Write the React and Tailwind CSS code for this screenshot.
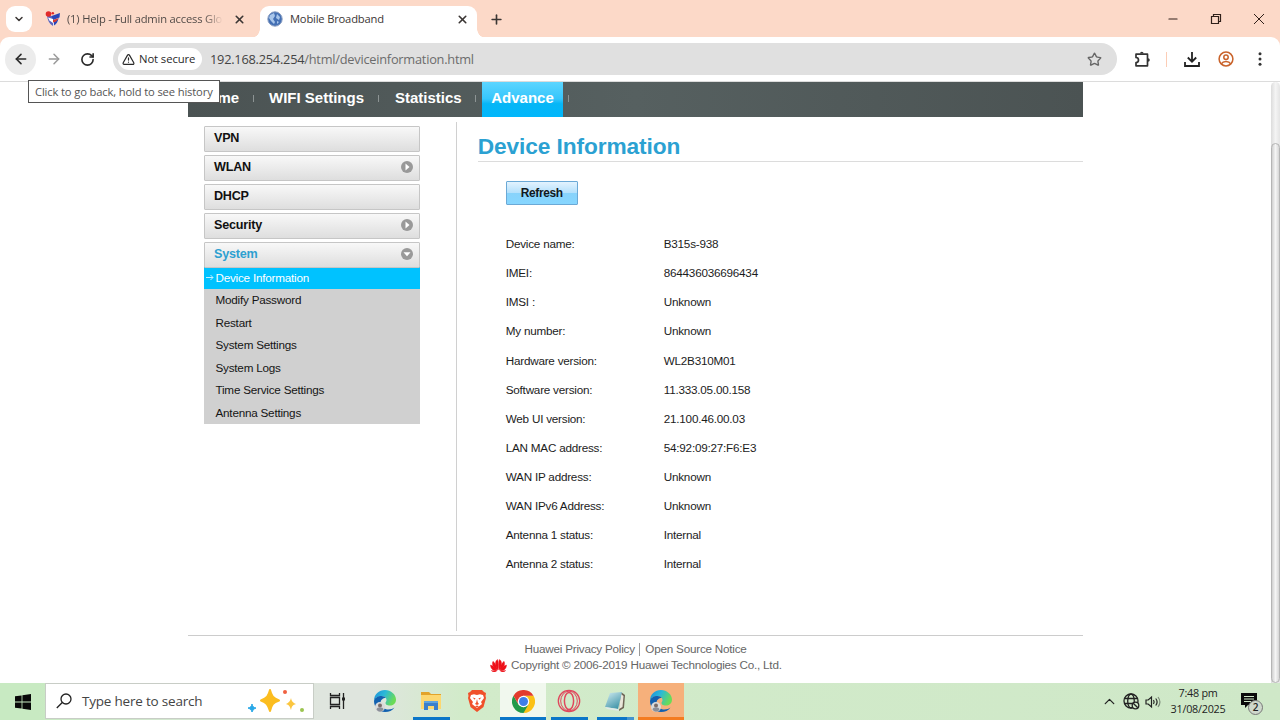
import { ArrowLeft, ArrowRight, ChevronDown, ChevronUp, Minus, Plus, RotateCw, Star, TriangleAlert, X } from 'lucide-react';

const menu = [
    { label: 'VPN' },
    { label: 'WLAN', icon: 'right' },
    { label: 'DHCP' },
    { label: 'Security', icon: 'right' },
    { label: 'System', icon: 'down' },
];

const subMenu = [
    'Modify Password',
    'Restart',
    'System Settings',
    'System Logs',
    'Time Service Settings',
    'Antenna Settings',
];

const info = [
    ['Device name:', 'B315s-938'],
    ['IMEI:', '864436036696434'],
    ['IMSI :', 'Unknown'],
    ['My number:', 'Unknown'],
    ['Hardware version:', 'WL2B310M01'],
    ['Software version:', '11.333.05.00.158'],
    ['Web UI version:', '21.100.46.00.03'],
    ['LAN MAC address:', '54:92:09:27:F6:E3'],
    ['WAN IP address:', 'Unknown'],
    ['WAN IPv6 Address:', 'Unknown'],
    ['Antenna 1 status:', 'Internal'],
    ['Antenna 2 status:', 'Internal'],
];

function ForumIcon() {
    return (
        <svg width="16" height="16" viewBox="0 0 16 16">
            <path d="M2 4l6 1.500V15C4 12.500 2.500 9 2 4z" fill="#5a66c0" />
            <path d="M8 5.500l7-3c0 6-2 10-7 12.500z" fill="#dfe2f2" />
            <path d="M6.500 5l8.500-3-.5 4.500L8 9z" fill="#2a46b8" />
            <path d="M9 11l4.500-3.500c-.7 3.500-2 5.500-4.500 7z" fill="#2a46b8" />
            <path d="M8 9l6-2-3 3.500-3 1z" fill="#d83a30" />
            <path d="M3 6.500l5 1.500v4L4.500 9.500z" fill="#fff" />
            <circle cx="3.500" cy="3" r="2.800" fill="#e22a2a" />
            <circle cx="7.800" cy="2.200" r="1.300" fill="#e22a2a" />
        </svg>
    );
}

function GlobeFavicon() {
    return (
        <svg width="16" height="16" viewBox="0 0 16 16">
            <circle cx="8" cy="8" r="7.200" fill="#4470b4" stroke="#8b9fc2" />
            <path d="M3 4l4-2 1 3-2 3 2 3-1 2-3-3-2-3zM10 3l3 3-1 3-3-2zM10 10l2 1-2 2z" fill="#a9c6ea" />
        </svg>
    );
}

function EdgeIcon() {
    return (
        <svg width="24" height="24" viewBox="0 0 24 24">
            <defs>
                <linearGradient id="edgeTop" x1="0" y1="0" x2="1" y2="0.400">
                    <stop offset="0" stopColor="#1c8edb" />
                    <stop offset="0.500" stopColor="#2bb9d8" />
                    <stop offset="1" stopColor="#6bdb57" />
                </linearGradient>
            </defs>
            <path d="M1 12C1 5 6 1 12 1s11 4.500 11 9.500c0 4-3 6-6 6-3.500 0-4.500-1.500-4.500-2.500s1-1.500 1-3c0-2-2-4-5-4-4 0-7 2.500-7.500 5z" fill="url(#edgeTop)" />
            <path d="M1 12c.5-3 3.500-5 7.500-5 2 0 3.500.8 4.300 2-3 0-5.300 2-5.300 5 0 4 4 6.500 8 6.500 2.500 0 4.500-.8 6-2C19.500 21.500 16 23 12 23 6 23 1 18.500 1 12z" fill="#1261b0" />
            <circle cx="7" cy="18" r="5" fill="#dadada" />
            <circle cx="7" cy="16.500" r="2" fill="#7b6c68" />
            <path d="M3.500 20.500c.5-3 6.500-3 7 0-2 3-5 3-7 0z" fill="#8b8f99" />
        </svg>
    );
}

function ExplorerIcon() {
    return (
        <svg width="22" height="20" viewBox="0 0 22 20">
            <path d="M1 1h8l2 2h10v15H1z" fill="#e2a32a" />
            <path d="M1 4h20v14H1z" fill="#fcd770" />
            <path d="M4 11h14v8h-4v-4H8v4H4z" fill="#3a7fcb" />
            <path d="M4 10h14v2H4z" fill="#5fa4df" />
        </svg>
    );
}

function BraveIcon() {
    return (
        <svg width="20" height="24" viewBox="0 0 20 24">
            <path d="M5 1h10l2 2 2 1-.5 3 .5 2-2.500 9-6.500 5-6.500-5L1 9l.5-2L1 4l2-1z" fill="#f0502a" />
            <path d="M4 6l3-.8 3 .8 3-.8 3 .8 1 3-3 4 1 2-5 4-5-4 1-2-3-4z" fill="#fff" />
            <path d="M5.500 8.500l3 .7-.7 1.500zM14.500 8.500l-3 .7.700 1.500zM10 10l.8 3.500L12 15l-2 1-2-1 1.200-1.500zM8 17.200l2-.8 2 .8-2 1.200z" fill="#f0502a" />
        </svg>
    );
}

function ChromeIcon() {
    return (
        <svg width="23" height="23" viewBox="0 0 24 24">
            <path d="M12 12L22.400 6A12 12 0 0 1 12 24z" fill="#fbc116" />
            <path d="M12 6h10.400L17.200 15z" fill="#fbc116" />
            <path d="M12 24A12 12 0 0 1 1.600 6l5.200 9 5.200 3 5.200-3z" fill="#229a49" />
            <path d="M1.600 6A12 12 0 0 1 22.400 6H12l-5.200 9z" fill="#e33b2e" />
            <circle cx="12" cy="12" r="6" fill="#fff" />
            <circle cx="12" cy="12" r="4.700" fill="#3f7ee8" />
        </svg>
    );
}

function OperaIcon() {
    return (
        <svg width="24" height="24" viewBox="0 0 24 24" fill="none" stroke="#e0475c">
            <circle cx="12" cy="12" r="10.700" strokeWidth="1.300" />
            <ellipse cx="12" cy="12" rx="8.300" ry="9.800" strokeWidth="1" />
            <ellipse cx="12" cy="12" rx="4.600" ry="8.600" strokeWidth="1.500" />
        </svg>
    );
}

function NotepadIcon() {
    return (
        <svg width="22" height="21" viewBox="0 0 22 21">
            <defs>
                <linearGradient id="note" x1="0" y1="0" x2="0.600" y2="1">
                    <stop offset="0" stopColor="#d4eef2" />
                    <stop offset="1" stopColor="#4597ab" />
                </linearGradient>
            </defs>
            <path d="M17 1l4 3-1 13-5 3z" fill="#6e6455" />
            <path d="M17 3l2.500 2-1 11-3.500 2z" fill="#e9e6da" />
            <path d="M6 2l12-1-4 17-13-2z" fill="url(#note)" />
            <path d="M1 16l13 2 1 2-12-2z" fill="#dfeaea" />
        </svg>
    );
}

function HuaweiLogo() {
    return (
        <svg width="17" height="13" viewBox="0 0 17 13" fill="#ee1018" stroke="#ee1018" strokeWidth="0.400">
            <path d="M8 11C5 7 4.500 2 7.600.5 8.600 3 8.500 8 8 11z" />
            <path d="M9 11c3-4 3.500-9 .4-10.500C8.400 3 8.500 8 9 11z" />
            <path d="M7.300 11.300C3 9 1.500 5 3 2.300 5.500 4 7 8 7.300 11.300z" />
            <path d="M9.700 11.300c4.300-2.300 5.800-6.300 4.300-9C11.500 4 10 8 9.700 11.300z" />
            <path d="M6.700 11.900C3 12 .5 9.500.5 6c3 .8 5 3 6.200 5.900z" />
            <path d="M10.300 11.900c3.700.1 6.200-2.400 6.200-5.900-3 .8-5 3-6.200 5.900z" />
            <path d="M6.300 12.300c-2 1-4 .7-5-.8zM10.700 12.300c2 1 4 .7 5-.8z" />
        </svg>
    );
}

function MenuArrow({ dir }) {
    return (
        <svg width="12" height="12" viewBox="0 0 12 12" className="mb-px">
            <circle cx="6" cy="6" r="6" fill="#999" />
            <path d={dir === 'down' ? 'M2.500 4.300h7L6 8.300z' : 'M4.500 2.500v7L8.500 6z'} fill="#fff" />
        </svg>
    );
}

function TabStrip() {
    return (
        <div className="flex h-[38px] bg-[#fcd9c8] text-[11px] tracking-[-0.19px] text-[#3b3634]">
            <div className="flex w-[260px] items-center pl-[6px]">
                <div className="flex h-[26px] w-[26px] items-center justify-center rounded-[9px] bg-white">
                    <ChevronDown size={12} strokeWidth={3} />
                </div>
                <div className="ml-[13px] flex h-4 w-4"><ForumIcon /></div>
                <div className="ml-[6px] w-[156px] bg-linear-to-r from-[#4b4542] from-88% to-transparent to-100% bg-clip-text text-[11.2px] whitespace-nowrap text-transparent">
                    (1) Help - Full admin access Glo
                </div>
                <X size={13} strokeWidth={3} className="ml-[10px]" />
            </div>
            <div className="relative mt-[6px] flex h-8 w-[217px] items-center rounded-t-[9px] bg-white pb-[6px] pl-[7px]">
                <span className="absolute bottom-0 -left-[9px] h-[9px] w-[9px] bg-[radial-gradient(circle_at_0_0,transparent_8.5px,white_9px)]" />
                <span className="absolute -right-[9px] bottom-0 h-[9px] w-[9px] bg-[radial-gradient(circle_at_100%_0,transparent_8.5px,white_9px)]" />
                <GlobeFavicon />
                <span className="ml-[7px] w-[166px] text-[11.2px]">Mobile Broadband</span>
                <X size={13} strokeWidth={3} />
            </div>
            <div className="flex grow items-center pl-[12px]">
                <Plus size={15} strokeWidth={2.6} />
            </div>
            <div className="flex items-center pr-[15px] text-[#30201a]">
                <Minus size={14} strokeWidth={1.8} />
                <svg className="ml-[30px]" width="12" height="12" viewBox="0 0 12 12" fill="none" stroke="currentColor" strokeWidth="1.200">
                    <path d="M1.500 3.500h7v7h-7zM3.500 3.500v-2h7v7h-2" />
                </svg>
                <svg className="ml-[31px]" width="12" height="12" viewBox="0 0 12 12" stroke="currentColor" strokeWidth="1">
                    <path d="M1 1l10 10M11 1L1 11" />
                </svg>
            </div>
        </div>
    );
}

function Toolbar() {
    return (
        <div className="bg-[#fcd9c8]">
            <div className="-mt-[1px] flex h-[45px] items-center rounded-t-[9px] border-b border-[#dcdcdc] bg-white pl-[5px] text-[#2a2a2a]">
                <div className="flex h-[31px] w-[31px] items-center justify-center rounded-full bg-[#ececec]">
                    <ArrowLeft size={16} strokeWidth={2.4} />
                </div>
                <ArrowRight size={16} strokeWidth={2.2} className="ml-[10px] text-[#999]" />
                <RotateCw size={15} strokeWidth={2.6} className="ml-[18px]" />
                <div className="ml-[18px] flex h-8 w-[1004px] items-center rounded-full bg-[#e0e0e0] pr-[15px] pl-[5px]">
                    <div className="flex h-[22px] w-[84px] items-center rounded-full bg-white pl-[4px]">
                        <TriangleAlert size={13} strokeWidth={2.2} />
                        <span className="ml-[4px] text-[11.3px] tracking-[-0.1px] whitespace-nowrap">Not secure</span>
                    </div>
                    <div className="ml-[8px] grow pt-[1px] text-[12.8px] tracking-[-0.24px] text-[#6c6c6c]">
                        <span className="text-[#444]">192.168.254.254</span>/html/deviceinformation.html
                    </div>
                    <Star size={15} strokeWidth={2.2} className="text-[#666]" />
                </div>
                <svg className="ml-[17px]" width="17" height="17" viewBox="0 0 17 17">
                    <path d="M2 3.200h11.500v11.600H2v-3.300a2.500 2.500 0 0 0 0-5z" fill="none" stroke="#333" strokeWidth="1.700" strokeLinejoin="round" />
                    <path d="M6 2.600a1.800 1.800 0 0 1 3.600 0zM14 7.200a1.800 1.800 0 0 1 0 3.600z" fill="#333" />
                </svg>
                <div className="ml-[15px] h-[15px] w-px bg-[#fccdb6]" />
                <svg className="ml-[17px]" width="16" height="16" viewBox="0 0 16 16" fill="none" stroke="#222" strokeWidth="1.800">
                    <path d="M8 1v9.500M3.800 6.500L8 10.700l4.200-4.200M1 11v4h14v-4" />
                </svg>
                <svg className="ml-[17.5px]" width="16" height="16" viewBox="0 0 16 16" fill="none" stroke="#c9622a" strokeWidth="1.500">
                    <circle cx="8" cy="8" r="6.900" />
                    <circle cx="8" cy="6.200" r="2.200" />
                    <path d="M3.300 12.800c1.800-3 7.600-3 9.400 0" />
                </svg>
                <svg className="ml-[24px]" width="4" height="16" viewBox="0 0 4 16" fill="#333">
                    <circle cx="2" cy="2.800" r="1.500" />
                    <circle cx="2" cy="8" r="1.500" />
                    <circle cx="2" cy="13.200" r="1.500" />
                </svg>
            </div>
        </div>
    );
}

function NavDivider() {
    return <span className="h-[7px] w-px bg-[#8d9494]" />;
}

function Navbar() {
    return (
        <nav className="flex h-[35px] items-center bg-[linear-gradient(90deg,#4b5353,#566060_50%,#4b5353)] pb-[2px] pl-[10px] text-[15px] font-bold whitespace-nowrap text-white">
            <span className="w-[55.5px]">Home</span>
            <NavDivider />
            <span className="w-[124px] pl-[15px]">WIFI Settings</span>
            <NavDivider />
            <span className="w-[96px] pl-[16px]">Statistics</span>
            <NavDivider />
            <span className="-mb-[2px] ml-[6px] flex h-[35px] w-[81px] items-center justify-center bg-[linear-gradient(#5cd5ff,#36c6fc_48%,#06b6f6_62%,#00b7fb)] pb-[2px]">
                Advance
            </span>
            <span className="w-[5px]" />
            <NavDivider />
        </nav>
    );
}

function Sidebar() {
    return (
        <aside className="w-[216px] pt-[8.5px]">
            <div className="flex flex-col gap-[3px]">
                {menu.map(item => (
                    <div
                        key={item.label}
                        className="flex h-[26px] items-center justify-between rounded-[1px] border border-[#c6c6c6] bg-linear-to-b from-[#f8f8f8] to-[#dedede] pr-[6px] pl-[9px] text-[12.6px] font-bold tracking-[-0.22px] text-[#111]"
                    >
                        <span className={item.icon === 'down' ? 'text-[#2da0d0]' : ''}>{item.label}</span>
                        {item.icon && <MenuArrow dir={item.icon} />}
                    </div>
                ))}
            </div>
            <div className="-mt-px bg-[#d0d0d0] text-[11.7px] tracking-[-0.22px] text-[#151515]">
                <div className="flex h-[22.5px] items-center bg-[#00c2ff] pl-[2px] text-white">
                    <svg width="8" height="7" viewBox="0 0 8 7" fill="none" stroke="#c4f0ff">
                        <path d="M0 3.500h7M4.500 1L7 3.500 4.500 6" />
                    </svg>
                    <span className="ml-[1.500px]">Device Information</span>
                </div>
                {subMenu.map(label => (
                    <div key={label} className="flex h-[22.5px] items-center pl-[11.500px]">{label}</div>
                ))}
            </div>
        </aside>
    );
}

function DeviceInformation() {
    return (
        <main className="ml-[20.5px] w-[606px] pt-[14px]">
            <h1 className="border-b border-[#dcdcdc] text-[22.7px] leading-[30px] font-bold tracking-[-0.1px] text-[#2ba1d2]">Device Information</h1>
            <div className="pt-[19px] pl-[28px]">
                <button className="block h-[24px] w-[72px] rounded-[1px] border border-[#6ba9d6] bg-[linear-gradient(#e3f3fe,#b5e1fc_48%,#88d3fb_52%,#86d6ff)] pt-px text-[11.9px] font-bold tracking-[-0.3px] text-[#101820]">
                    Refresh
                </button>
                <dl className="mt-[24.5px] text-[11.7px] tracking-[-0.22px] text-[#1c1c1c]">
                    {info.map(([label, value]) => (
                        <div key={label} className="flex h-[29.07px] items-center">
                            <dt className="w-[158px]">{label}</dt>
                            <dd>{value}</dd>
                        </div>
                    ))}
                </dl>
            </div>
        </main>
    );
}

function Footer() {
    return (
        <footer className="h-[47px] border-t border-[#ccc] pt-[5px] text-[11.7px] leading-[16px] tracking-[-0.22px] text-[#666]">
            <div className="flex items-center pl-[337px]">
                <span>Huawei Privacy Policy</span>
                <span className="mr-[5.500px] ml-[4px] h-[13px] w-px bg-[#999]" />
                <span>Open Source Notice</span>
            </div>
            <div className="flex items-center pl-[302px]">
                <HuaweiLogo />
                <span className="ml-[4.500px]">Copyright © 2006-2019 Huawei Technologies Co., Ltd.</span>
            </div>
        </footer>
    );
}

function TaskItem({ children, className = '', bar = 'bg-transparent' }) {
    return (
        <div className={`flex w-[46px] flex-col items-center ${className}`}>
            <div className="flex h-[34px] items-center justify-center pt-[2px]">{children}</div>
            <div className={`h-[3px] ${bar}`} />
        </div>
    );
}

function Taskbar() {
    return (
        <div className="flex h-[37px] bg-[linear-gradient(90deg,#c8eac2_0,#c8eac2_3%,#dfe5de_25%,#dfe5de_29%,#d2ebca_36%,#cfe8c8_100%)]">
            <div className="flex w-[45px] items-center justify-center">
                <svg width="16" height="16" viewBox="0 0 16 16" fill="#080808">
                    <path d="M0 2.300l6.600-.9v6.200H0zM7.400 1.300L16 0v7.600H7.400zM0 8.400h6.600v6.200L0 13.700zM7.400 8.400H16V16l-8.600-1.200z" />
                </svg>
            </div>
            <div className="mb-[1px] flex w-[269px] items-center border border-[#c8cdc6] bg-white pl-[10px]">
                <svg width="16" height="16" viewBox="0 0 16 16" fill="none" stroke="#222" strokeWidth="1.300">
                    <circle cx="10" cy="6" r="5" />
                    <path d="M6.300 9.500L.8 15" />
                </svg>
                <span className="ml-[10px] w-[164px] pt-px text-[13.5px] tracking-[-0.2px] text-[#444]">Type here to search</span>
                <svg width="58" height="28" viewBox="0 0 58 28">
                    <path d="M24 3c1.500 6 3 8 9 10.500-6 2-7.500 4-9 10.500-2-6.500-3.500-8.500-9-10.500 6-2.500 7.500-4.500 9-10.500z" fill="#fbbd20" stroke="#fbbd20" strokeWidth="2" strokeLinejoin="round" />
                    <path d="M45 11c.8 3.500 1.800 4.500 5 6-3.200 1-4.200 2-5 6-1.200-4-2-5-5-6 3-1.500 4-2.500 5-6z" fill="#fbc640" />
                    <path d="M6 17c.5 2.500 1.500 3.500 4 4-2.500 1-3 2-4 4-.5-2-1.500-3-4-4 2.500-.5 3.500-1.500 4-4z" fill="#28a8e8" stroke="#28a8e8" />
                    <circle cx="39" cy="5" r="2" fill="#f06040" />
                    <circle cx="56" cy="23" r="2" fill="#9bc450" />
                </svg>
            </div>
            <TaskItem>
                <svg width="17" height="16" viewBox="0 0 17 16" fill="none" stroke="#222" strokeWidth="1.300">
                    <path d="M1.500 4.500h9v7h-9zM1.500 0v2.500h9V0M1.500 16v-2.500h9V16M14.500 0v16" />
                    <path d="M13 4.500h3v3h-3z" fill="#222" stroke="none" />
                </svg>
            </TaskItem>
            <div className="w-[2px]" />
            <TaskItem><EdgeIcon /></TaskItem>
            <TaskItem bar="w-[37px] bg-[#0b76c8]"><ExplorerIcon /></TaskItem>
            <TaskItem><BraveIcon /></TaskItem>
            <TaskItem className="bg-[#f1f8ee]" bar="w-full bg-[#0b76c8]"><ChromeIcon /></TaskItem>
            <TaskItem bar="w-[37px] bg-[#0b76c8]"><OperaIcon /></TaskItem>
            <TaskItem bar="w-[37px] border-r-[7px] border-[#4394cf] bg-[#0b76c8]"><NotepadIcon /></TaskItem>
            <TaskItem className="bg-[#f6b07b]" bar="w-full bg-[#f47c20]"><EdgeIcon /></TaskItem>
            <div className="flex grow items-center justify-end pr-[22px] text-[#222]">
                <ChevronUp size={17} strokeWidth={1.8} />
                <svg className="ml-[5px]" width="17" height="17" viewBox="0 0 17 17" fill="none" stroke="currentColor" strokeWidth="1.300">
                    <circle cx="8" cy="8" r="7" />
                    <ellipse cx="8" cy="8" rx="3.300" ry="7" />
                    <path d="M1.500 5.500h13M1.500 10.500h13" />
                    <circle cx="12.500" cy="12.500" r="3.300" fill="#cfe8c8" />
                    <path d="M10.200 10.200l4.600 4.600" />
                </svg>
                <svg className="ml-[5px]" width="16" height="14" viewBox="0 0 16 14" fill="none" stroke="currentColor" strokeWidth="1.200">
                    <path d="M1 5h2.200L6.500 2v10L3.200 9H1zM8.500 5c.8 1.200.8 2.800 0 4M10.700 3.500c1.600 2 1.600 5 0 7" />
                    <path d="M13 2c2.300 3 2.300 7 0 10" stroke="#7b8b78" />
                </svg>
                <div className="ml-[7px] w-[60px] pb-[1px] text-center text-[10.8px] leading-[16px] tracking-[-0.25px] whitespace-nowrap">
                    <div>7:48 pm</div>
                    <div>31/08/2025</div>
                </div>
                <div className="relative ml-[13px] h-[17px] w-[17px]">
                    <svg width="16" height="15" viewBox="0 0 16 15">
                        <path d="M0 0h16v12H7l-3 3v-3H0z" fill="#0a0a0a" />
                        <path d="M3 3.500h10M3 6h10M3 8.500h7" stroke="#cfe8c8" />
                    </svg>
                    <span className="absolute top-[7px] left-[7px] flex h-[15px] w-[15px] items-center justify-center rounded-full border border-[#777] bg-[#cfd8cc] text-[10px] font-semibold">
                        2
                    </span>
                </div>
            </div>
        </div>
    );
}

export default function App() {
    return (
        <div className="relative flex h-[720px] w-[1280px] flex-col overflow-hidden bg-white font-[Open_Sans,Noto_Sans,sans-serif]">
            <TabStrip />
            <Toolbar />
            <div className="flex h-[601px]">
                <div className="ml-[187.5px] flex w-[895.5px] flex-col font-[Liberation_Sans,Arial,sans-serif]">
                    <Navbar />
                    <div className="flex h-[518px] pl-[16.5px]">
                        <Sidebar />
                        <div className="mt-[5px] ml-[36.500px] h-[509px] w-px bg-[#d0d0d0]" />
                        <DeviceInformation />
                    </div>
                    <Footer />
                </div>
                <div className="ml-auto w-[9px] rounded-t-[5px] bg-linear-to-r from-[#dcdcdc] via-[#f4f4f4] to-[#e4e4e4] pt-[61px]">
                    <div className="h-[540px] rounded-[5px] border border-[#b5b5b5] bg-linear-to-r from-[#d0d0d0] via-[#f5f5f5] to-[#d6d6d6]" />
                </div>
            </div>
            <Taskbar />
            <div className="absolute top-[80px] left-[28px] flex h-[23px] w-[192px] items-center border border-[#555] bg-white pt-px pl-[6px] text-[11.2px] tracking-[-0.14px] whitespace-nowrap text-[#555]">
                Click to go back, hold to see history
            </div>
        </div>
    );
}
